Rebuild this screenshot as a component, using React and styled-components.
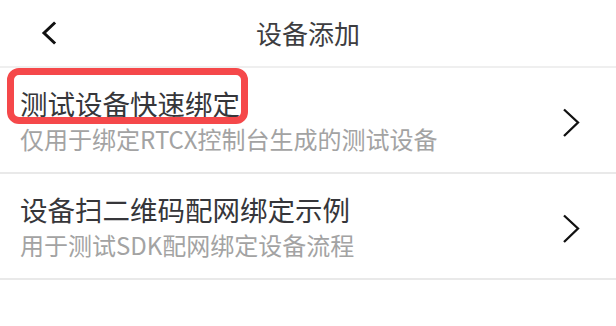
import React from "react";
import styled, { createGlobalStyle } from "styled-components";

const Global = createGlobalStyle`
  html, body { margin: 0; padding: 0; background: #ffffff; }
  body { font-family: "Noto Sans CJK SC", "Noto Sans", sans-serif; }
  * { box-sizing: border-box; }
`;

const Page = styled.div`
  width: 616px;
  height: 326px;
  background: #ffffff;
  overflow: hidden;
`;

const Header = styled.header`
  display: grid;
  grid-template-columns: 1fr auto 1fr;
  align-items: center;
  height: 68px;
  border-bottom: 2px solid #efefef;
  padding-bottom: 1px;
`;

const BackButton = styled.button`
  justify-self: start;
  display: flex;
  align-items: center;
  background: none;
  border: 0;
  padding: 0 0 0 41px;
  cursor: pointer;
`;

const Title = styled.h1`
  margin: 0;
  font-size: 26px;
  line-height: 36px;
  font-weight: 400;
  color: #3d3d40;
`;

const List = styled.ul`
  list-style: none;
  margin: 0;
  padding: 0;
`;

const Row = styled.li`
  position: relative;
  display: flex;
  align-items: center;
  justify-content: space-between;
  height: 106px;
  padding: 0 36px 0 20px;
  border-bottom: 2px solid #e9e9e9;
`;

const Texts = styled.div`
  display: flex;
  flex-direction: column;
  margin-top: ${(p) => p.$shift || 0}px;
`;

const ItemTitle = styled.div`
  font-size: 27.5px;
  line-height: 36px;
  color: #36363a;
  white-space: nowrap;
`;

const ItemDesc = styled.div`
  font-size: 24px;
  line-height: 36px;
  color: #a3a3a3;
  white-space: nowrap;
`;

const Chevron = styled.svg`
  display: block;
  margin-top: 6px;
  flex: none;
`;

const Highlight = styled.div`
  position: absolute;
  left: 7px;
  top: 0px;
  width: 241px;
  height: 56px;
  border: 7px solid #f5484a;
  border-radius: 12px;
  pointer-events: none;
`;

function BackIcon() {
  return (
    <svg width="16" height="24" viewBox="0 0 16 24">
      <polyline
        points="13,2.5 3,12 13,21.5"
        fill="none"
        stroke="#111"
        strokeWidth="3"
        strokeLinecap="square"
        strokeLinejoin="miter"
      />
    </svg>
  );
}

function ArrowIcon() {
  return (
    <Chevron width="18" height="30" viewBox="0 0 18 30">
      <polyline
        points="2,1.5 16,14.5 2,28"
        fill="none"
        stroke="#111"
        strokeWidth="2.3"
      />
    </Chevron>
  );
}

const items = [
  {
    title: "测试设备快速绑定",
    desc: "仅用于绑定RTCX控制台生成的测试设备",
    highlight: true,
    shift: 2,
  },
  {
    title: "设备扫二维码配网绑定示例",
    desc: "用于测试SDK配网绑定设备流程",
    shift: 2,
  },
];

export default function App() {
  return (
    <Page>
      <Global />
      <Header>
        <BackButton aria-label="返回">
          <BackIcon />
        </BackButton>
        <Title>设备添加</Title>
        <span />
      </Header>
      <List>
        {items.map((it) => (
          <Row key={it.title}>
            <Texts $shift={it.shift}>
              <ItemTitle>{it.title}</ItemTitle>
              <ItemDesc>{it.desc}</ItemDesc>
            </Texts>
            <ArrowIcon />
            {it.highlight && <Highlight />}
          </Row>
        ))}
      </List>
    </Page>
  );
}
